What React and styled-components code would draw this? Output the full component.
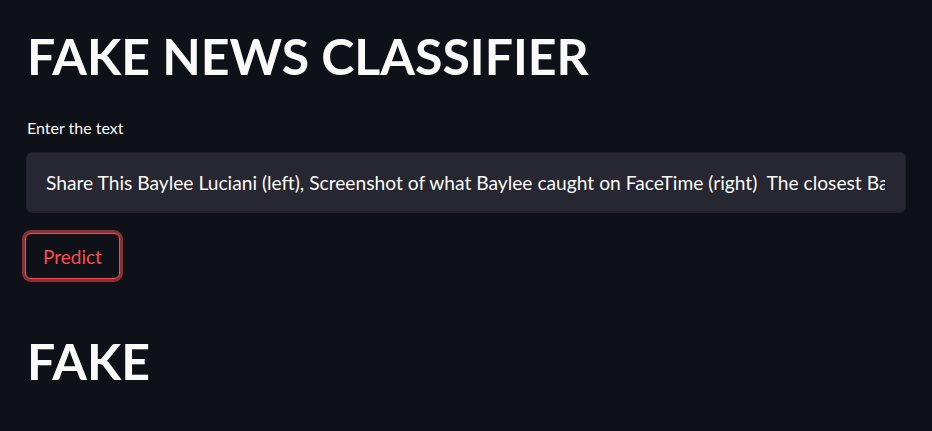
import React, { useState } from 'react';
import styled, { createGlobalStyle } from 'styled-components';

const GlobalStyle = createGlobalStyle`
  html, body {
    margin: 0;
    padding: 0;
    background-color: #0e1117;
  }
  body {
    font-family: Lato, "Noto Sans", sans-serif;
    color: #fafafa;
  }
`;

const Main = styled.main`
  display: flex;
  flex-direction: column;
  padding: 24px 26px 40px 26px;
  min-height: 431px;
  box-sizing: border-box;
  background-color: #0e1117;
`;

const Title = styled.h1`
  margin: 0;
  padding-top: ${({ top }) => top || 0}px;
  font-size: 50px;
  line-height: 64px;
  font-weight: 700;
  color: #fafafa;
  padding-left: 1px;
`;

const Field = styled.div`
  display: flex;
  flex-direction: column;
  gap: 14px;
  margin-top: 30px;
`;

const Label = styled.label`
  font-size: 16px;
  line-height: 20px;
  padding-left: 1px;
  color: #fafafa;
`;

const TextInput = styled.input`
  box-sizing: border-box;
  width: 880px;
  height: 61px;
  padding: 0 20px 0 19px;
  background-color: #262730;
  border: 1px solid #1f2029;
  border-bottom-width: 2px;
  border-radius: 6px;
  color: #fafafa;
  font-family: Lato, "Noto Sans", sans-serif;
  font-size: 19.2px;
  outline: none;
`;

const PredictBtn = styled.button`
  align-self: flex-start;
  margin-top: 20px;
  margin-left: -1px;
  height: 46px;
  padding: 0 17px;
  background-color: #0e1117;
  border: 1px solid #ff4b4b;
  border-radius: 6px;
  box-shadow: 0 0 0 3px #8a2f35;
  color: #ff4b4b;
  font-family: Lato, "Noto Sans", sans-serif;
  font-size: 19px;
  cursor: pointer;
`;

export default function App() {
  const [text, setText] = useState(
    'Share This Baylee Luciani (left), Screenshot of what Baylee caught on FaceTime (right)  The closest Baylee Luciani ever came to a ghost was on a video call with her best friend'
  );

  return (
    <>
      <GlobalStyle />
      <Main>
        <Title>FAKE NEWS CLASSIFIER</Title>
        <Field>
          <Label htmlFor="news">Enter the text</Label>
          <TextInput id="news" value={text} onChange={(e) => setText(e.target.value)} />
        </Field>
        <PredictBtn type="button">Predict</PredictBtn>
        <Title top={50}>FAKE</Title>
      </Main>
    </>
  );
}
